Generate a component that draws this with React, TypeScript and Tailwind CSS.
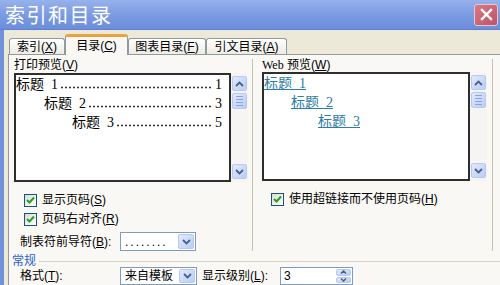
import React from "react";

const cjk = "font-['Liberation_Sans','Noto_Sans_CJK_SC',sans-serif]";

function Acc({ k }: { k: string }) {
  return (
    <>
      (<span className="underline">{k}</span>)
    </>
  );
}

function Chevron({ dir }: { dir: "up" | "down" }) {
  return (
    <svg width="9" height="6" viewBox="0 0 9 6" aria-hidden="true">
      <polyline
        points={dir === "up" ? "1,5 4.5,1.5 8,5" : "1,1 4.5,4.5 8,1"}
        fill="none"
        stroke="#4d6185"
        strokeWidth="1.8"
      />
    </svg>
  );
}

function XpButton({ children, className = "" }: { children?: React.ReactNode; className?: string }) {
  return (
    <div
      className={
        "flex items-center justify-center rounded-[2px] border border-[#b7c9f3] bg-gradient-to-br from-[#e1e9fd] to-[#b9cdf7] " +
        className
      }
    >
      {children}
    </div>
  );
}

function Scrollbar() {
  return (
    <div className="w-[17px] self-stretch flex flex-col bg-[#f6f5f1] px-[1px] pt-[3px] pb-[3px]">
      <XpButton className="h-[15px]">
        <Chevron dir="up" />
      </XpButton>
      <XpButton className="h-[16px] mt-[2px] flex-col gap-[2px]">
        <div className="w-[7px] h-px bg-[#8ea4d8]" />
        <div className="w-[7px] h-px bg-[#8ea4d8]" />
        <div className="w-[7px] h-px bg-[#8ea4d8]" />
        <div className="w-[7px] h-px bg-[#8ea4d8]" />
      </XpButton>
      <div className="flex-1" />
      <XpButton className="h-[15px]">
        <Chevron dir="down" />
      </XpButton>
    </div>
  );
}

function Checkbox() {
  return (
    <div className="w-[13px] h-[13px] border border-[#1c5180] bg-gradient-to-br from-[#dcdcd5] to-white flex items-center justify-center">
      <svg width="9" height="8" viewBox="0 0 9 8" aria-hidden="true">
        <polyline points="1,4 3.5,6.5 8,1.5" fill="none" stroke="#21a121" strokeWidth="2" />
      </svg>
    </div>
  );
}

function Tab({ label, k, w, selected }: { label: string; k: string; w: string; selected?: boolean }) {
  if (selected) {
    return (
      <div
        className={
          w +
          " h-[21px] -mb-px relative z-10 rounded-t-[3px] border-x border-[#919b9c] border-t-[3px] border-t-[#e9a23c] bg-[#f9f8f4] flex items-center justify-center text-[12px] text-black"
        }
      >
        {label}
        <Acc k={k} />
      </div>
    );
  }
  return (
    <div
      className={
        w +
        " h-[16px] rounded-t-[3px] border-x border-t border-[#919b9c] bg-gradient-to-b from-white to-[#ecebe4] flex items-center justify-center text-[12px] text-black"
      }
    >
      {label}
      <Acc k={k} />
    </div>
  );
}

function TocRow({ text, num, indent }: { text: string; num: string; indent: string }) {
  return (
    <div className={"flex items-center h-[19px] pr-[7px] " + indent}>
      <span className="whitespace-pre">{text}</span>
      {/* dot leader */}
      <span className="flex-1 min-w-0 h-[3px] self-end mb-[5px] mx-[2px] bg-[radial-gradient(circle,#333_0.9px,transparent_1.2px)] bg-[length:4px_3px] bg-repeat-x" />
      <span>{num}</span>
    </div>
  );
}

function WebRow({ text, indent }: { text: string; indent: string }) {
  return (
    <div className={"flex items-center h-[19px] " + indent}>
      <span className="whitespace-pre underline text-[#2b7ca6]">{text}</span>
    </div>
  );
}

function Combo({ text, w, textClass = "" }: { text: string; w: string; textClass?: string }) {
  return (
    <div className={w + " self-stretch flex border border-[#7f9db9] bg-white"}>
      <div className={"flex-1 flex items-center pl-[4px] text-[12px] overflow-hidden whitespace-nowrap " + textClass}>
        {text}
      </div>
      <XpButton className="w-[16px] m-px">
        <Chevron dir="down" />
      </XpButton>
    </div>
  );
}

export default function App() {
  return (
    <div className={"w-[500px] h-[285px] overflow-hidden bg-[#ece9d8] flex flex-col text-black " + cjk}>
      {/* Title bar */}
      <div className="h-[30px] shrink-0 flex items-center justify-between bg-gradient-to-b from-[#97b2ec] via-[#7b9be2] to-[#6c8ddb] border-b border-[#5f80d2]">
        <div className="pl-[5px] text-[20px] text-white font-['Noto_Sans_CJK_SC',sans-serif] tracking-[1.5px]">
          索引和目录
        </div>
        <div className="mr-[2px] w-[24px] h-[22px] rounded-[3px] border border-[#e9c6cc] bg-gradient-to-br from-[#d77b88] to-[#bd5366] flex items-center justify-center">
          <svg width="13" height="13" viewBox="0 0 13 13" aria-hidden="true">
            <path d="M2 2 L11 11 M11 2 L2 11" stroke="white" strokeWidth="2.4" strokeLinecap="square" />
          </svg>
        </div>
      </div>

      <div className="flex flex-1 min-h-0">
        <div className="w-[4px] bg-[#7392dc]" />
        <div className="flex-1 flex flex-col pl-[4px] pt-[3px]">
          {/* Tabs */}
          <div className="flex items-end pl-[1px] h-[22px]">
            <Tab label="索引" k="X" w="w-[56px]" />
            <Tab label="目录" k="C" w="w-[63px]" selected />
            <Tab label="图表目录" k="F" w="w-[78px]" />
            <Tab label="引文目录" k="A" w="w-[81px]" />
          </div>

          {/* Panel */}
          <div className="flex-1 flex flex-col border-l border-t border-[#919b9c] bg-[#f9f8f4]">
            <div className="flex h-[196px] shrink-0">
              {/* Left column */}
              <div className="ml-[5px] w-[234px] flex flex-col">
                <div className="h-[18px] pt-[2px] text-[12px] leading-[16px]">
                  打印预览<Acc k="V" />
                </div>
                <div className="h-[109px] flex">
                  <div className="w-[217px] border-2 border-[#2e2e2e] bg-white text-[14px] font-['Liberation_Serif','Noto_Sans_CJK_SC',serif]">
                    <TocRow text="标题  1" num="1" indent="pl-0" />
                    <TocRow text="标题  2" num="3" indent="pl-[28px]" />
                    <TocRow text="标题  3" num="5" indent="pl-[56px]" />
                  </div>
                  <Scrollbar />
                </div>
                <div className="mt-[11px] h-[14px] flex items-center pl-[10px] gap-[5px] text-[12px]">
                  <Checkbox />
                  <span>
                    显示页码<Acc k="S" />
                  </span>
                </div>
                <div className="mt-[5px] h-[14px] flex items-center pl-[10px] gap-[5px] text-[12px]">
                  <Checkbox />
                  <span>
                    页码右对齐<Acc k="R" />
                  </span>
                </div>
                <div className="mt-[6px] h-[19px] flex items-center pl-[6px]">
                  <div className="w-[100px] text-[12px] whitespace-nowrap">
                    制表符前导符<Acc k="B" />:
                  </div>
                  <Combo text="........" w="w-[76px]" textClass="tracking-[2px]" />
                </div>
              </div>

              {/* Right column */}
              <div className="ml-[4px] w-[241px] mt-[4px] border-x border-[#c5c2b2] pl-[9px] pr-[5px] flex flex-col">
                <div className="h-[14px] -mt-[1px] text-[12px] leading-[14px] whitespace-nowrap">
                  <span className="font-['Liberation_Serif',serif]">Web</span> 预览<Acc k="W" />
                </div>
                <div className="h-[109px] flex">
                  <div className="w-[208px] border-2 border-[#2e2e2e] bg-white text-[14px] font-['Liberation_Serif','Noto_Sans_CJK_SC',serif]">
                    <WebRow text="标题  1" indent="pl-0" />
                    <WebRow text="标题  2" indent="pl-[27px]" />
                    <WebRow text="标题  3" indent="pl-[54px]" />
                  </div>
                  <Scrollbar />
                </div>
                <div className="mt-[11px] h-[14px] flex items-center pl-[9px] gap-[5px] text-[12px]">
                  <Checkbox />
                  <span>
                    使用超链接而不使用页码<Acc k="H" />
                  </span>
                </div>
              </div>
            </div>

            {/* 常规 group */}
            <div className="mt-[3px] h-[14px] flex items-center pl-[3px]">
              <span className="text-[12px] text-[#2f5fcf]">常规</span>
              <div className="flex-1 ml-[3px] border-t border-[#d6d3c4]" />
            </div>
            <div className="mt-[-1px] h-[18px] flex items-center pl-[11px] text-[12px]">
              <div className="w-[100px] whitespace-nowrap">
                格式<Acc k="T" />:
              </div>
              <Combo text="来自模板" w="w-[77px]" />
              <div className="ml-[5px] w-[78px] whitespace-nowrap">
                显示级别<Acc k="L" />:
              </div>
              <div className="w-[73px] self-stretch flex border border-[#7f9db9] bg-white">
                <div className="flex-1 flex items-center pl-[3px]">3</div>
                <div className="w-[15px] flex flex-col m-px gap-px">
                  <XpButton className="flex-1">
                    <svg width="7" height="4" viewBox="0 0 7 4" aria-hidden="true">
                      <polyline points="1,3.5 3.5,1 6,3.5" fill="none" stroke="#4d6185" strokeWidth="1.5" />
                    </svg>
                  </XpButton>
                  <XpButton className="flex-1">
                    <svg width="7" height="4" viewBox="0 0 7 4" aria-hidden="true">
                      <polyline points="1,0.5 3.5,3 6,0.5" fill="none" stroke="#4d6185" strokeWidth="1.5" />
                    </svg>
                  </XpButton>
                </div>
              </div>
            </div>
          </div>
        </div>
      </div>
    </div>
  );
}
